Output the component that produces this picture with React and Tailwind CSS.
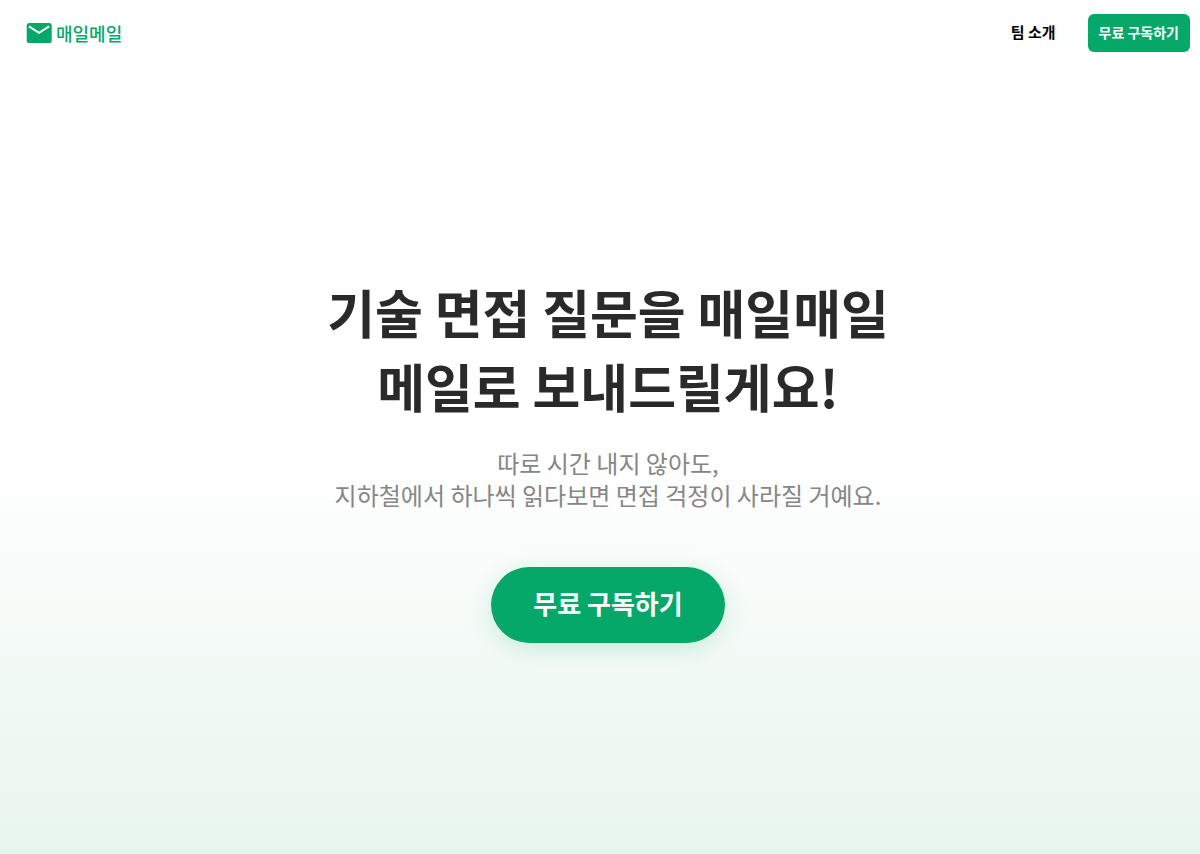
function MailIcon() {
  return (
    <svg className="h-5 w-[26px] shrink-0" viewBox="0 0 26 20" aria-hidden="true">
      <rect x="0.7" y="0" width="25" height="20" rx="2.6" fill="#06a86a" />
      <path d="M2.9 3.4 L13 9.8 L23.1 3.4" fill="none" stroke="#fff" strokeWidth="2" />
    </svg>
  );
}

function Header() {
  return (
    <header className="flex h-[66px] items-center justify-between pr-[10px] pl-[26px]">
      <a href="#" className="flex items-center gap-1 text-lg leading-6 font-medium text-[#06a86a]">
        <MailIcon />
        <span>매일메일</span>
      </a>
      <nav className="flex items-center gap-8">
        <a href="#team" className="pb-[2px] text-[15px] leading-6 font-bold text-black">
          팀 소개
        </a>
        <button
          type="button"
          className="h-[38px] rounded-md bg-[#06a86a] px-[11px] pb-[2px] text-sm font-bold text-white"
        >
          무료 구독하기
        </button>
      </nav>
    </header>
  );
}

export default function App() {
  return (
    <div className="flex min-h-screen flex-col bg-linear-to-b from-white from-53% to-[#e8f5ee] font-['Noto_Sans_CJK_KR',sans-serif]">
      <Header />
      <main className="flex flex-1 flex-col items-center justify-center pb-[2px] pl-4 text-center">
        <h1 className="text-[52px] leading-[74px] font-bold text-[#2a2a2a]">
          기술 면접 질문을 매일매일
          <br />
          메일로 보내드릴게요!
        </h1>
        <p className="mt-6 text-2xl leading-8 text-[#868686]">
          따로 시간 내지 않아도,
          <br />
          지하철에서 하나씩 읽다보면 면접 걱정이 사라질 거예요.
        </p>
        <button
          type="button"
          className="mt-14 h-[76px] rounded-full bg-[#06a86a] px-[42px] pb-[6px] text-[26px] font-bold text-white shadow-[0_6px_24px_rgba(6,168,106,0.18)]"
        >
          무료 구독하기
        </button>
      </main>
    </div>
  );
}
